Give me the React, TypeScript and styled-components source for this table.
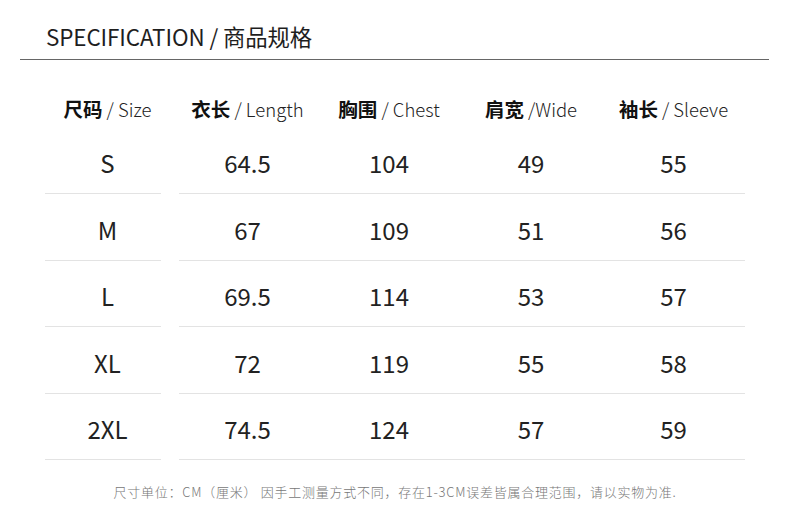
import React from "react";
import styled, { createGlobalStyle } from "styled-components";

const Global = createGlobalStyle`
  html, body { margin: 0; padding: 0; background: #fff; }
  body { font-family: "Noto Sans CJK SC", "Noto Sans", sans-serif; color: #222; }
`;

const Page = styled.div`
  width: 790px;
  height: 531px;
  background: #fff;
  overflow: hidden;
`;

const TitleBar = styled.div`
  margin: 0 21px 0 20px;
  padding: 21px 0 8px 26px;
  border-bottom: 1px solid #666;
`;

const Title = styled.h1`
  margin: 0;
  font-size: 22.4px;
  line-height: 30px;
  font-weight: 400;
  color: #1e1e1e;
  letter-spacing: -0.1px;
`;

const Table = styled.div`
  margin-top: 29px;
`;

const Grid = styled.div<{ $h: number }>`
  display: grid;
  grid-template-columns: 139px 141px 142px 142px 143px;
  margin-left: 38px;
  height: ${(p) => p.$h}px;
  align-items: center;
`;

const HeadCell = styled.div`
  text-align: center;
  white-space: nowrap;
  line-height: 24px;
`;

const Zh = styled.span`
  font-size: 19.5px;
  font-weight: 700;
  color: #111;
`;

const En = styled.span`
  font-size: 18.5px;
  font-weight: 300;
  color: #222;
`;

const Body = styled.div`
  padding-top: 4px;
`;

const Row = styled.div`
  padding-bottom: 5.5px;
`;

const Cell = styled.div`
  text-align: center;
  font-size: 24px;
  font-weight: 400;
  line-height: 30px;
  color: #222;
`;

const Rule = styled.div`
  display: flex;
  gap: 18px;
  padding-left: 45px;
  height: 1px;
`;

const Seg = styled.div<{ $w: number }>`
  width: ${(p) => p.$w}px;
  height: 1px;
  background: #e3e3e3;
`;

const Note = styled.p`
  margin: 16px 0 0;
  text-align: center;
  font-size: 13px;
  line-height: 20px;
  font-weight: 300;
  color: #777;
  letter-spacing: 0.75px;
  white-space: pre;
`;

const headers: [string, string][] = [
  ["尺码", " / Size"],
  ["衣长", " / Length"],
  ["胸围", " / Chest"],
  ["肩宽", " /Wide"],
  ["袖长", " / Sleeve"],
];

const rows: string[][] = [
  ["S", "64.5", "104", "49", "55"],
  ["M", "67", "109", "51", "56"],
  ["L", "69.5", "114", "53", "57"],
  ["XL", "72", "119", "55", "58"],
  ["2XL", "74.5", "124", "57", "59"],
];

export default function App() {
  return (
    <Page>
      <Global />
      <TitleBar>
        <Title>SPECIFICATION / 商品规格</Title>
      </TitleBar>
      <Table>
        <Grid $h={40}>
          {headers.map(([zh, en]) => (
            <HeadCell key={zh}>
              <Zh>{zh}</Zh>
              <En>{en}</En>
            </HeadCell>
          ))}
        </Grid>
        <Body>
          {rows.map((r) => (
            <Row key={r[0]}>
              <Grid $h={60}>
                {r.map((v, i) => (
                  <Cell key={i}>{v}</Cell>
                ))}
              </Grid>
              <Rule>
                <Seg $w={116} />
                <Seg $w={566} />
              </Rule>
            </Row>
          ))}
        </Body>
      </Table>
      <Note>尺寸单位：CM（厘米） 因手工测量方式不同，存在1-3CM误差皆属合理范围，请以实物为准.</Note>
    </Page>
  );
}
